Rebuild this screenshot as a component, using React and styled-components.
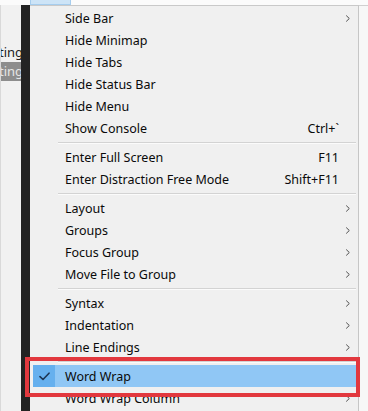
import React from "react";
import styled, { createGlobalStyle } from "styled-components";

const GlobalStyle = createGlobalStyle`
  html, body {
    margin: 0;
    padding: 0;
    background: #f3f3f3;
  }
  * { box-sizing: border-box; }
`;

const Screen = styled.div`
  position: relative;
  width: 368px;
  height: 411px;
  overflow: hidden;
  display: flex;
  flex-direction: column;
  font-family: "Noto Sans", "Open Sans", sans-serif;
  font-size: 12.5px;
  color: #0a0a0a;
`;

const MenuBar = styled.div`
  height: 5px;
  flex: none;
  background: #fbfbfb;
  display: flex;
`;

const MenuBarTab = styled.div`
  margin-left: 30px;
  width: 41px;
  height: 5px;
  background: #cde4f7;
  border: 1px solid #a6cdee;
  border-top: none;
`;

const Body = styled.div`
  flex: 1;
  display: flex;
  min-height: 0;
`;

const SidePane = styled.div`
  width: 21px;
  flex: none;
  background: #f1f1f1;
  border-left: 1px solid #d9d9d9;
  padding-top: 38px;
  display: flex;
  flex-direction: column;
  overflow: hidden;
`;

const SideLine = styled.div`
  height: 19px;
  line-height: 19px;
  margin-left: -14px;
  white-space: nowrap;
  font-size: 13px;
  color: ${p => (p.$active ? "#e6e6e6" : "#222")};
  background: ${p => (p.$active ? "#8d8d8d" : "transparent")};
`;

const Gutter = styled.div`
  width: 9px;
  flex: none;
  background: #232323;
`;

const Dropdown = styled.div`
  width: 329px;
  flex: none;
  background: #f0f0f0;
  border-top: 1px solid #c9c9c9;
  border-right: 1px solid #c6c6c6;
  padding: 1px 1px 2px 3px;
  display: flex;
  flex-direction: column;
`;

const Outside = styled.div`
  flex: 1;
  background: #f7f7f7;
  border-top: 1px solid #d0d0d0;
`;

const Row = styled.div`
  height: 22px;
  flex: none;
  display: grid;
  grid-template-columns: 22px 1fr auto 18px;
  align-items: center;
  background: ${p => (p.$selected ? "#90c7f5" : "transparent")};
`;

const CheckCell = styled.div`
  height: 100%;
  display: flex;
  align-items: center;
  justify-content: center;
  background: ${p => (p.$selected ? "#66b0ee" : "transparent")};
`;

const Label = styled.span`
  padding-left: 10px;
  white-space: nowrap;
`;

const Shortcut = styled.span`
  white-space: nowrap;
  text-align: right;
`;

const ArrowCell = styled.div`
  display: flex;
  align-items: center;
  justify-content: center;
`;

const Separator = styled.div`
  height: 7px;
  flex: none;
  display: flex;
  align-items: center;
  padding-left: 25px;
  padding-right: 1px;

  &::before {
    content: "";
    flex: 1;
    height: 1px;
    background: #d3d3d3;
    box-shadow: 0 1px 0 #fbfbfb;
  }
`;

const Highlight = styled.div`
  position: absolute;
  left: 25px;
  top: 357px;
  width: 335px;
  height: 40px;
  border: 4px solid #e2383e;
  pointer-events: none;
`;

const Chevron = () => (
  <svg width="6" height="9" viewBox="0 0 6 9">
    <path d="M1.2 1.5 L4.3 4.5 L1.2 7.5" fill="none" stroke="#505050" strokeWidth="1" />
  </svg>
);

const Check = () => (
  <svg width="11" height="9" viewBox="0 0 11 9">
    <path d="M1 4.6 L4 7.5 L10 1.2" fill="none" stroke="#1d3553" strokeWidth="1.6" strokeLinecap="round" strokeLinejoin="round" />
  </svg>
);

const items = [
  { label: "Side Bar", sub: true },
  { label: "Hide Minimap" },
  { label: "Hide Tabs" },
  { label: "Hide Status Bar" },
  { label: "Hide Menu" },
  { label: "Show Console", key: "Ctrl+`" },
  "sep",
  { label: "Enter Full Screen", key: "F11" },
  { label: "Enter Distraction Free Mode", key: "Shift+F11" },
  "sep",
  { label: "Layout", sub: true },
  { label: "Groups", sub: true },
  { label: "Focus Group", sub: true },
  { label: "Move File to Group", sub: true },
  "sep",
  { label: "Syntax", sub: true },
  { label: "Indentation", sub: true },
  { label: "Line Endings", sub: true },
  "sep",
  { label: "Word Wrap", checked: true },
  { label: "Word Wrap Column", sub: true },
];

const App = () => {
  return (
    <>
      <GlobalStyle />
      <Screen>
        <MenuBar>
          <MenuBarTab />
        </MenuBar>
        <Body>
          <SidePane>
            <SideLine>etting</SideLine>
            <SideLine $active>etting</SideLine>
          </SidePane>
          <Gutter />
          <Dropdown>
            {items.map((it, i) =>
              it === "sep" ? (
                <Separator key={i} />
              ) : (
                <Row key={i} $selected={it.checked}>
                  <CheckCell $selected={it.checked}>{it.checked && <Check />}</CheckCell>
                  <Label>{it.label}</Label>
                  <Shortcut>{it.key}</Shortcut>
                  <ArrowCell>{it.sub && <Chevron />}</ArrowCell>
                </Row>
              )
            )}
          </Dropdown>
          <Outside />
        </Body>
        <Highlight />
      </Screen>
    </>
  );
};

export default App;
